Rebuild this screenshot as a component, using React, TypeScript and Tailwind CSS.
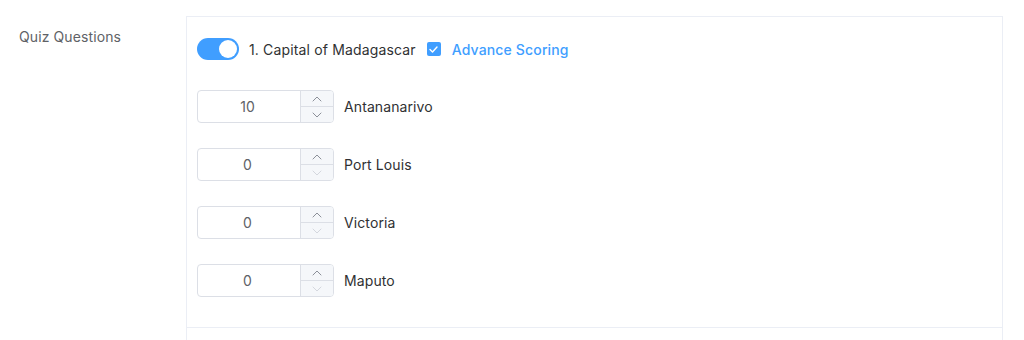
import React from "react";

const rows = [
  { value: "10", label: "Antananarivo", downDisabled: false },
  { value: "0", label: "Port Louis", downDisabled: true },
  { value: "0", label: "Victoria", downDisabled: true },
  { value: "0", label: "Maputo", downDisabled: true },
];

function Chevron({ up, light }: { up: boolean; light: boolean }) {
  return (
    <svg width="10" height="6" viewBox="0 0 10 6" fill="none">
      <path
        d={up ? "M1 5 L5 1 L9 5" : "M1 1 L5 5 L9 1"}
        stroke={light ? "#d4d7de" : "#8c9099"}
        strokeWidth="1"
        strokeLinecap="round"
        strokeLinejoin="round"
      />
    </svg>
  );
}

function NumberInput({ value, downDisabled }: { value: string; downDisabled: boolean }) {
  return (
    <div className="flex h-[33px] w-[137px] rounded-[4px] border border-[#dcdfe6] bg-white overflow-hidden">
      <div className="flex flex-1 items-center justify-center pr-[3px] text-[14px] text-[#606266]">{value}</div>
      <div className="flex w-[33px] flex-col border-l border-[#dcdfe6] bg-[#f5f7fa]">
        <div className="flex flex-1 items-center justify-center border-b border-[#dcdfe6]">
          <Chevron up light={false} />
        </div>
        <div className="flex flex-1 items-center justify-center">
          <Chevron up={false} light={downDisabled} />
        </div>
      </div>
    </div>
  );
}

export default function App() {
  return (
    <div
      className="flex h-[340px] w-[1024px] overflow-hidden bg-white"
      style={{ fontFamily: "Inter, 'Noto Sans', sans-serif" }}
    >
      <div className="w-[186px] shrink-0 pl-[19px] pt-[26px] text-[14px] tracking-[0.1px] text-[#606266]">Quiz Questions</div>
      <div className="mt-[16px] flex w-[817px] shrink-0 flex-col border-x border-t border-[#ebeef5]">
        <div className="flex flex-col pl-[10px] pt-[21px] pb-[30px]">
          <div className="flex h-[22px] items-center">
            <div className="flex h-[22px] w-[42px] items-center justify-end rounded-full bg-[#409eff] pr-[2px]">
              <div className="h-[18px] w-[18px] rounded-full bg-white" />
            </div>
            <span className="ml-[10px] text-[14px] tracking-[0.15px] text-[#303133]">1. Capital of Madagascar</span>
            <div className="ml-[11px] flex h-[14px] w-[14px] items-center justify-center rounded-[2px] bg-[#409eff]">
              <svg width="9" height="7" viewBox="0 0 9 7" fill="none">
                <path d="M1 3.5 L3.5 6 L8 1" stroke="white" strokeWidth="1.4" strokeLinecap="round" strokeLinejoin="round" />
              </svg>
            </div>
            <span className="ml-[11px] text-[14px] font-medium tracking-[0.15px] text-[#409eff]">Advance Scoring</span>
          </div>
          <div className="mt-[30px] flex flex-col gap-[25px]">
            {rows.map((r) => (
              <div key={r.label} className="flex items-center">
                <NumberInput value={r.value} downDisabled={r.downDisabled} />
                <span className="ml-[10px] text-[14px] tracking-[0.1px] text-[#303133]">{r.label}</span>
              </div>
            ))}
          </div>
        </div>
        <div className="border-t border-[#ebeef5]" />
      </div>
    </div>
  );
}
